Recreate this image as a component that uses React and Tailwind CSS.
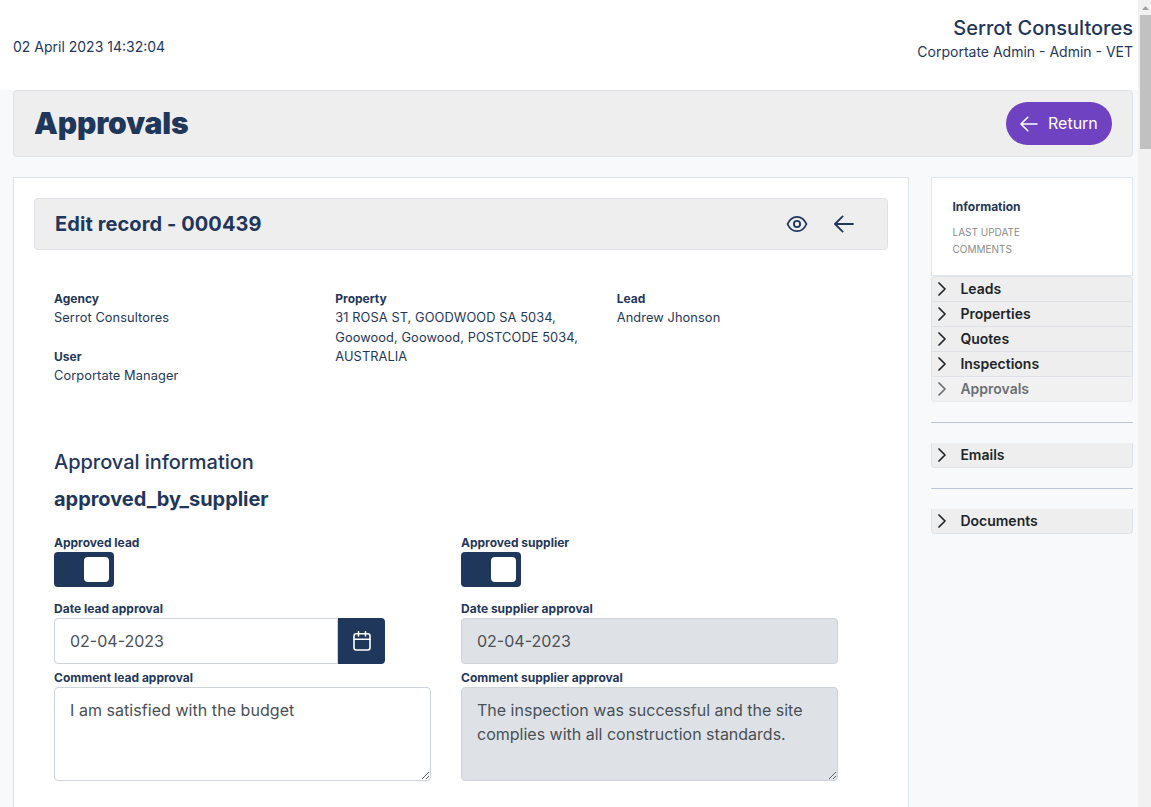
import React from "react";

function ArrowLeft({ className }) {
  return (
    <svg viewBox="0 0 20 18" className={className} fill="none" stroke="currentColor" strokeWidth="1.8" strokeLinecap="round" strokeLinejoin="round">
      <path d="M19 9H1.2M8.6 1.4L1 9l7.6 7.6" />
    </svg>
  );
}

function Eye() {
  return (
    <svg viewBox="0 0 22 18" className="h-[18px] w-[22px]" fill="none" stroke="currentColor" strokeWidth="1.8">
      <path d="M1.500 9C3.600 4.300 7 1.800 11 1.800S18.400 4.300 20.500 9C18.400 13.700 15 16.200 11 16.200S3.600 13.700 1.500 9z" strokeLinejoin="round" />
      <circle cx="11" cy="9" r="3.100" />
    </svg>
  );
}

function Calendar() {
  return (
    <svg viewBox="0 0 18 20" className="h-5 w-[18px]" fill="none" stroke="white" strokeWidth="1.6" strokeLinecap="round">
      <rect x="1" y="2.800" width="16" height="16.200" rx="2.200" />
      <path d="M1 8.300h16M5.500 0.800v4.200M12.500 0.800v4.200" />
    </svg>
  );
}

function Chevron() {
  return (
    <svg viewBox="0 0 8 14" className="h-3.5 w-2" fill="none" stroke="currentColor" strokeWidth="1.7" strokeLinecap="round" strokeLinejoin="round">
      <path d="M1 1l6 6-6 6" />
    </svg>
  );
}

function Detail({ label, children }) {
  return (
    <div className="text-[12.8px] leading-[19.5px] tracking-[0.09px]">
      <div className="text-xs leading-[18px] font-bold tracking-normal">{label}</div>
      {children}
    </div>
  );
}

function Label({ children }) {
  return <div className="text-xs leading-[18px] font-bold">{children}</div>;
}

function Toggle() {
  return (
    <div className="flex h-[35px] w-[60px] items-center justify-end rounded bg-[#1f375b] pr-[5px]">
      <div className="size-[25px] rounded bg-white" />
    </div>
  );
}

function MenuItem({ children, className = "" }) {
  return (
    <div className={"flex h-[25px] items-center border-x border-b border-[#dee2e6] bg-[#eeeeee] pl-[6px] text-sm font-semibold text-[#212529] " + className}>
      <Chevron />
      <span className="ml-[14.4px]">{children}</span>
    </div>
  );
}

export default function App() {
  return (
    <div className="flex h-[807px] w-[1151px] overflow-hidden bg-[#f8f9fb] font-['Inter',sans-serif] text-[#1f375b]">
      <div className="w-[1138px] shrink-0">
        <header className="flex h-[90px] justify-between bg-white pr-[5px] pl-[13px]">
          <div className="pt-9 text-sm leading-[21px]">02 April 2023 14:32:04</div>
          <div className="pt-4 text-right">
            <div className="text-xl leading-6 font-medium">Serrot Consultores</div>
            <div className="mt-px text-sm leading-[21px]">Corportate Admin - Admin - VET</div>
          </div>
        </header>

        <div className="ml-[13px] flex h-[67px] w-[1120px] items-center justify-between rounded border border-[#dee2e6] bg-[#eeeeee] pr-5 pl-5">
          <h1 className="-mt-0.5 text-[30px] leading-9 font-black tracking-[-0.15px]">Approvals</h1>
          <button className="flex h-[43px] w-[106px] items-center rounded-full bg-[#6f42c1] pl-[14px] text-base text-white">
            <ArrowLeft className="h-4 w-[18px]" />
            <span className="-mt-0.5 ml-[10px]">Return</span>
          </button>
        </div>

        <div className="mt-5 ml-[13px] flex items-start gap-[22px]">
          <main className="h-[700px] w-[896px] shrink-0 border border-[#dee2e6] bg-white px-5 pt-5">
            <div className="flex h-[52px] items-center rounded border border-[#dee2e6] bg-[#eeeeee] pr-[33.5px] pl-5">
              <h2 className="flex-1 text-xl leading-6 font-bold tracking-[0.09px]">Edit record - 000439</h2>
              <Eye />
              <ArrowLeft className="ml-[26px] h-[18px] w-5" />
            </div>

            <div className="mt-10 ml-5 flex">
              <div className="w-[281.300px]">
                <Detail label="Agency">Serrot Consultores</Detail>
                <div className="mt-5">
                  <Detail label="User">Corportate Manager</Detail>
                </div>
              </div>
              <div className="w-[281.500px]">
                <Detail label="Property">
                  31 ROSA ST, GOODWOOD SA 5034,<br />Goowood, Goowood, POSTCODE 5034,<br />AUSTRALIA
                </Detail>
              </div>
              <Detail label="Lead">Andrew Jhonson</Detail>
            </div>

            <div className="mt-[65px] ml-5">
              <h3 className="text-xl leading-6 font-medium tracking-[-0.03px]">Approval information</h3>
              <h3 className="mt-[13px] text-xl leading-6 font-bold tracking-[-0.03px]">approved_by_supplier</h3>
            </div>

            <div className="mt-[23px] ml-5 grid grid-cols-[377px_377px] gap-x-[30px]">
              <div>
                <Label>Approved lead</Label>
                <Toggle />
              </div>
              <div>
                <Label>Approved supplier</Label>
                <Toggle />
              </div>
              <div className="mt-[13px]">
                <Label>Date lead approval</Label>
                <div className="flex h-[46px] w-[331px]">
                  <div className="flex w-[284px] items-center rounded-l border border-[#ced4da] pl-[15px] text-base text-[#495057]">02-04-2023</div>
                  <div className="flex w-[47px] items-center justify-center rounded-r bg-[#1f375b]"><Calendar /></div>
                </div>
              </div>
              <div className="mt-[13px]">
                <Label>Date supplier approval</Label>
                <div className="flex h-[46px] items-center rounded border border-[#ced4da] bg-[#dee2e6] pl-[15px] text-base text-[#495057]">02-04-2023</div>
              </div>
              <div className="mt-[5px]">
                <Label>Comment lead approval</Label>
                <textarea className="block h-[94px] w-[377px] rounded border border-[#ced4da] bg-white px-[15px] py-[10px] text-base leading-6 tracking-[0.05px] text-[#495057]" defaultValue="I am satisfied with the budget" />
              </div>
              <div className="mt-[5px]">
                <Label>Comment supplier approval</Label>
                <textarea readOnly className="block h-[94px] w-[377px] rounded border border-[#ced4da] bg-[#dee2e6] px-[15px] py-[10px] text-base leading-6 text-[#495057]" defaultValue="The inspection was successful and the site complies with all construction standards." />
              </div>
            </div>
          </main>

          <aside className="w-[202px] shrink-0">
            <div className="h-[99px] border border-[#dfe7f1] bg-white pt-5 pl-[20.500px]">
              <div className="text-xs leading-[18px] font-bold">Information</div>
              <div className="mt-2 text-[10px] leading-[17px] text-[#8c8c8c]">
                LAST UPDATE<br />COMMENTS
              </div>
            </div>
            <MenuItem className="h-[26px] rounded-t border-t">Leads</MenuItem>
            <MenuItem>Properties</MenuItem>
            <MenuItem>Quotes</MenuItem>
            <MenuItem>Inspections</MenuItem>
            <MenuItem className="rounded-b opacity-65">Approvals</MenuItem>
            <div className="mt-5 mb-5 h-px bg-[#bcc5d9]" />
            <MenuItem className="rounded-b">Emails</MenuItem>
            <div className="mt-5 mb-5 h-px bg-[#bcc5d9]" />
            <MenuItem className="rounded-b">Documents</MenuItem>
          </aside>
        </div>
      </div>

      <div className="flex w-[13px] shrink-0 flex-col bg-[#f1f1f1] pl-[2px]">
        <div className="flex h-[15px] items-center pl-[2px]">
          <svg viewBox="0 0 7 4" className="mt-px h-1 w-[7px]" fill="#a3a3a3"><path d="M3.500 0L7 4H0z" /></svg>
        </div>
        <div className="h-[134px] bg-[#c1c1c1]" />
      </div>
    </div>
  );
}
